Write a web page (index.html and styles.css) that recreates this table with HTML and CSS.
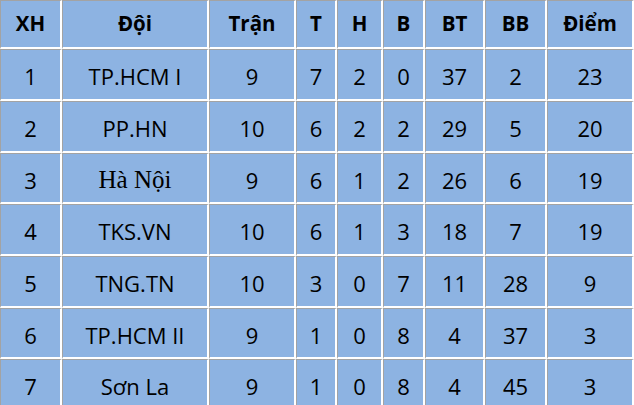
FILE: index.html
```html
<!DOCTYPE html>
<html lang="vi">
<head>
<meta charset="utf-8">
<title>Bảng xếp hạng</title>
<link rel="stylesheet" href="styles.css">
</head>
<body>
<table class="standings">
  <colgroup>
    <col class="c-xh"><col class="c-team"><col class="c-played"><col class="c-w"><col class="c-d"><col class="c-l"><col class="c-gf"><col class="c-ga"><col class="c-pts">
  </colgroup>
  <thead>
    <tr class="head-row">
      <th>XH</th><th>Đội</th><th>Trận</th><th>T</th><th>H</th><th>B</th><th>BT</th><th>BB</th><th>Điểm</th>
    </tr>
  </thead>
  <tbody>
    <tr class="row r1"><td>1</td><td>TP.HCM I</td><td>9</td><td>7</td><td>2</td><td>0</td><td>37</td><td>2</td><td>23</td></tr>
    <tr class="row r2"><td>2</td><td>PP.HN</td><td>10</td><td>6</td><td>2</td><td>2</td><td>29</td><td>5</td><td>20</td></tr>
    <tr class="row r3"><td>3</td><td class="serif">Hà Nội</td><td>9</td><td>6</td><td>1</td><td>2</td><td>26</td><td>6</td><td>19</td></tr>
    <tr class="row r4"><td>4</td><td>TKS.VN</td><td>10</td><td>6</td><td>1</td><td>3</td><td>18</td><td>7</td><td>19</td></tr>
    <tr class="row r5"><td>5</td><td>TNG.TN</td><td>10</td><td>3</td><td>0</td><td>7</td><td>11</td><td>28</td><td>9</td></tr>
    <tr class="row r6"><td>6</td><td>TP.HCM II</td><td>9</td><td>1</td><td>0</td><td>8</td><td>4</td><td>37</td><td>3</td></tr>
    <tr class="row r7"><td>7</td><td>Sơn La</td><td>9</td><td>1</td><td>0</td><td>8</td><td>4</td><td>45</td><td>3</td></tr>
  </tbody>
</table>
</body>
</html>
```
FILE: styles.css
```css
html, body {
  margin: 0;
  padding: 0;
  background: #ffffff;
  overflow: hidden;
}

.standings {
  width: 634px;
  table-layout: fixed;
  border-collapse: separate;
  border-spacing: 0;
  font-family: "Open Sans", "Liberation Sans", sans-serif;
  color: #000;
}

.c-xh { width: 62px; }
.c-team { width: 147px; }
.c-played { width: 87px; }
.c-w { width: 41px; }
.c-d { width: 46px; }
.c-l { width: 42px; }
.c-gf { width: 60px; }
.c-ga { width: 62px; }
.c-pts { width: 87px; }

.standings th,
.standings td {
  background: #8db3e2;
  border-top: 1px solid #a3a3a3;
  border-left: 1px solid #a3a3a3;
  border-bottom: 2px solid #ffffff;
  border-right: 2px solid #ffffff;
  text-align: center;
  vertical-align: middle;
  padding: 0;
  box-sizing: border-box;
  white-space: nowrap;
}

.standings th {
  height: 49px;
  font-size: 20.5px;
  font-weight: 700;
  padding-bottom: 2px;
}

.standings td {
  height: 52px;
  font-size: 22px;
  font-weight: 400;
  padding-top: 3px;
}

.standings .r3 td,
.standings .r6 td {
  height: 51px;
}

.standings td.serif {
  font-family: "Liberation Serif", "DejaVu Serif", serif;
  font-size: 25px;
}
```
